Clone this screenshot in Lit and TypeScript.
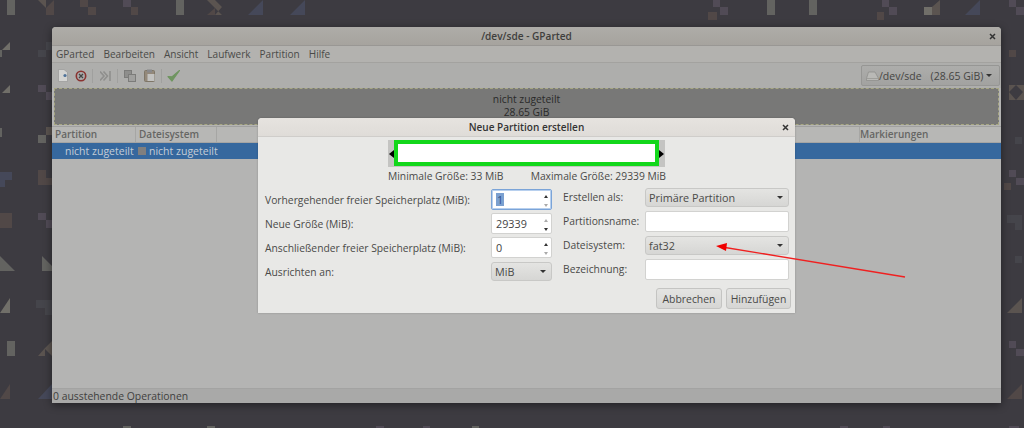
import { LitElement, html, css, svg } from "lit";
import { customElement } from "lit/decorators.js";

const GRAY = "#636360", TAN = "#5b5450", BROWN = "#514847", PURPLE = "#514b56", DARK = "#45454b", BLUE = "#454859", LGRAY = "#716f69";

const rects: [number, number, number, number, string][] = [
  [7, 0, 8, 15, GRAY], [80, 0, 8, 7, BROWN], [88, 7, 8, 8, BROWN], [123, 0, 8, 7, PURPLE], [131, 7, 7, 8, BROWN], [176, 0, 8, 15, GRAY],
  [713, 0, 7, 7, PURPLE], [720, 7, 8, 8, PURPLE], [708, 12, 9, 8, BROWN], [767, 0, 8, 15, GRAY], [809, 0, 8, 15, GRAY],
  [877, 12, 7, 8, BROWN], [889, 7, 8, 8, PURPLE], [882, 0, 7, 7, PURPLE], [924, 7, 8, 8, LGRAY],
  [0, 50, 2, 7, GRAY], [38, 50, 8, 7, DARK], [46, 42, 6, 8, DARK], [38, 85, 8, 7, PURPLE], [46, 92, 6, 8, PURPLE],
  [0, 128, 2, 9, GRAY], [38, 135, 8, 8, GRAY], [46, 127, 6, 8, TAN], [0, 213, 12, 15, BROWN], [38, 213, 8, 7, PURPLE], [46, 220, 6, 8, PURPLE],
  [7, 341, 8, 15, GRAY], [1009, 0, 7, 7, PURPLE], [1016, 7, 8, 8, PURPLE], [1009, 50, 7, 7, BROWN],
  [1015, 137, 7, 7, DARK], [1009, 170, 7, 7, PURPLE], [1016, 178, 8, 7, PURPLE], [1004, 183, 7, 7, BROWN],
  [1015, 256, 7, 7, DARK], [1015, 306, 7, 7, LGRAY], [1009, 341, 7, 7, PURPLE], [1016, 349, 8, 7, PURPLE],
  [123, 426, 8, 2, GRAY], [207, 426, 8, 2, GRAY], [376, 426, 8, 2, PURPLE], [423, 426, 7, 2, PURPLE], [472, 426, 7, 2, GRAY],
  [840, 426, 8, 2, PURPLE], [883, 426, 7, 2, PURPLE], [1009, 426, 10, 2, PURPLE],
];

const polys: [string, string][] = [
  ["38,0 46,0 46,8", TAN], ["46,8 54,0 54,15 46,15", BROWN],
  ["207,0 215,0 222,7 215,15 222,15 215,8", TAN], ["207,15 215,8 215,15", BROWN],
  ["248,15 263,0 263,15", BLUE], ["290,15 305,0 305,15", BLUE],
  ["932,7 940,0 940,15 932,15", TAN], ["965,15 980,0 980,15", BLUE],
  ["10,42 10,50 2,50", LGRAY], ["10,85 10,93 2,93", LGRAY], ["0,172 12,172 12,180 5,180 5,187 0,187", BLUE],
  ["38,170 46,170 46,178 52,178 52,185 38,185", BROWN], ["0,256 15,271 0,271", GRAY], ["42,256 52,266 52,271 42,271", GRAY],
  ["10,298 10,313 0,313", LGRAY], ["36,300 52,300 52,315 45,315 45,308 36,308", DARK],
  ["38,341 45,348 38,356 45,356 45,349 52,356 52,341 45,348", TAN], ["10,384 10,399 0,399", BROWN], ["38,399 52,384 52,399", BLUE],
  ["1009,85 1024,85 1024,100 1009,100 1009,92 1016,100 1023,92 1016,85 1009,92", TAN],
  ["1007,215 1022,215 1022,230 1015,230 1015,223 1007,223", DARK],
  ["1022,298 1022,313 1007,313", TAN], ["1022,384 1022,399 1007,399", BROWN],
];

const closeIcon = html`<svg class="x" width="7" height="7" viewBox="0 0 7 7"><path d="M1 1L6 6M6 1L1 6" stroke="#333" stroke-width="1.5"/></svg>`;

@customElement("app-root")
export class AppRoot extends LitElement {
  static styles = css`
    :host { display: block; width: 1024px; height: 428px; position: relative; overflow: hidden; background: #3d3b41; font-family: "Open Sans", "Noto Sans", sans-serif; font-size: 10.3px; color: #4e4e4c; }
    * { box-sizing: border-box; }
    .wall, .arrow { position: absolute; inset: 0; }
    .win { position: absolute; left: 52px; top: 27px; width: 949px; height: 376px; display: flex; flex-direction: column; background: #b4b4b3; border-radius: 4px 4px 0 0; box-shadow: 0 2px 9px rgba(0,0,0,.45); overflow: hidden; }
    .wintitle { height: 19px; flex: none; display: flex; align-items: center; justify-content: center; position: relative; background: linear-gradient(#aeaca8, #a6a39e); border-bottom: 1px solid #999794; font-weight: 600; font-size: 10.1px; color: #3f3f3d; }
    .x { position: absolute; right: 5px; top: 6px; display: block; }
    .menu { height: 17px; flex: none; display: flex; align-items: center; gap: 9px; padding-left: 4px; background: #b3b2af; border-bottom: 1px solid #a3a29f; color: #4a4a48; font-size: 10.05px; }
    .toolbar { height: 25px; flex: none; display: flex; align-items: center; padding-left: 6px; background: #aeaeac; position: relative; }
    .toolbar svg { flex: none; display: block; }
    .sep { width: 1px; height: 14px; background: #a0a09e; flex: none; }
    .device { margin-left: auto; margin-right: 1px; width: 139px; height: 21px; display: flex; align-items: center; padding: 0 7px 0 4px; background: linear-gradient(#adadab, #a2a2a0); border: 1px solid #969694; border-radius: 2px; color: #454543; font-size: 10.5px; white-space: nowrap; }
    .device .size { margin-left: 9px; }
    .device .caret { margin-left: auto; }
    .caret { width: 0; height: 0; border-left: 3px solid transparent; border-right: 3px solid transparent; border-top: 3px solid #333; flex: none; }
    .graph { height: 37px; flex: none; margin: 0 2px 1px 2px; border: 1px dashed #a6a682; background: #787877; display: flex; flex-direction: column; align-items: center; padding-top: 4px; color: #2a2a2a; line-height: 13px; font-size: 10.3px; }
    .thead { height: 17px; flex: none; display: flex; align-items: center; background: #b7b7b5; border-top: 1px solid #a0a09f; border-bottom: 1px solid #a5a5a4; font-weight: 600; color: #666664; font-size: 10px; position: relative; }
    .thead span { padding-left: 3px; border-right: 1px solid #a6a6a4; height: 15px; line-height: 15px; }
    .thead .c1 { width: 84px; } .thead .c2 { width: 81px; } .thead .c3 { width: 643px; } .thead .c4 { border: 0; padding-left: 0; }
    .row { height: 16px; flex: none; display: flex; align-items: center; background: #36689e; color: #c5cdd6; font-size: 10.5px; }
    .row .a { width: 86px; padding-left: 13px; white-space: nowrap; flex: none; }
    .row i { width: 8px; height: 8px; background: #7f7f7f; margin-right: 3px; flex: none; }
    .fill { flex: 1; }
    .status { height: 15px; flex: none; background: #a9a9a8; border-top: 1px solid #a3a3a2; display: flex; align-items: center; padding-left: 1px; color: #3f3f3e; font-size: 10.4px; }
    .dlg { position: absolute; left: 258px; top: 118px; width: 537px; height: 195px; display: flex; flex-direction: column; background: #e8e8e6; border-radius: 4px 4px 0 0; box-shadow: 0 0 2px rgba(0,0,0,.25); color: #4a4a48; }
    .dtitle { height: 19px; flex: none; display: flex; align-items: center; justify-content: center; position: relative; background: linear-gradient(#e6e3df, #dfdcd8); border-bottom: 1px solid #cfcdca; font-weight: 600; font-size: 10px; color: #333; border-radius: 4px 4px 0 0; }
    .dtitle .x { right: 6px; top: 6px; }
    .preview { align-self: flex-start; margin: 3px 0 0 130px; width: 277px; height: 27px; background: #c4c4c2; position: relative; padding: 0 6px; flex: none; }
    .bar { height: 26px; border: 4px solid #12d71a; background: #fff; }
    .h { position: absolute; top: 10px; width: 0; height: 0; border-top: 4px solid transparent; border-bottom: 4px solid transparent; }
    .h.l { left: 1px; border-right: 5px solid #000; }
    .h.r { right: 1px; border-left: 5px solid #000; }
    .minmax { margin: 3px 0 0 130px; width: 278px; display: flex; justify-content: space-between; line-height: 13px; flex: none; white-space: nowrap; font-size: 10.3px; }
    .form { margin: 3px 0 0 7px; display: grid; grid-template-columns: 226px 61px 93px 144px; grid-auto-rows: 24px; align-items: center; }
    .form label { white-space: nowrap; margin-top: 4px; }
    .form label.rl { padding-left: 11px; margin-top: 0; margin-bottom: 2px; }
    .up2 { margin-bottom: 2px; }
    .down2 { margin-top: 2px; }
    .spin { height: 21px; display: flex; background: #fff; border: 1px solid #d2d2d0; border-radius: 2px; align-items: center; padding-left: 4px; color: #444; font-size: 10.8px; position: relative; margin-top: 2px; }
    .spin.focus { border-color: #7ba4d8; box-shadow: inset 0 0 0 1px #b8d0ee; }
    .spin .sel { background: #7ba0d0; color: #33508a; padding: 0 1px; line-height: 13px; }
    .spin .ar { position: absolute; right: 1px; top: 2px; bottom: 2px; width: 8px; display: flex; flex-direction: column; justify-content: space-between; align-items: center; }
    .ar b { width: 0; height: 0; border-left: 2.5px solid transparent; border-right: 2.5px solid transparent; display: block; margin: 3px 0; }
    .ar b.up { border-bottom: 3px solid #333; } .ar b.dn { border-top: 3px solid #333; }
    .ar b.up.off { border-bottom-color: #aaa; } .ar b.dn.off { border-top-color: #aaa; }
    .sel-btn { height: 19px; display: flex; align-items: center; padding: 0 5px 0 3px; background: linear-gradient(#e4e4e2, #d6d6d4); border: 1px solid #c8c8c6; border-radius: 3px; color: #4a4a48; font-size: 10.8px; }
    .sel-btn .caret { margin-left: auto; }
    .entry { height: 21px; background: #fff; border: 1px solid #d2d2d0; border-radius: 2px; }
    .buttons { margin: 6px 4px 0 0; display: flex; justify-content: flex-end; gap: 4px; }
    .btn { height: 21px; display: flex; align-items: center; justify-content: center; background: linear-gradient(#e4e4e2, #d6d6d4); border: 1px solid #c4c4c2; border-radius: 3px; color: #4a4a48; font-size: 10.4px; }
    .btn.a1 { width: 66px; } .btn.a2 { width: 65px; }
    .ml5 { margin-left: 5px; } .ml6 { margin-left: 6px; } .ml7 { margin-left: 7px; } .ml8 { margin-left: 8px; }
    .arrow { pointer-events: none; }
  `;

  render() {
    return html`
      <svg class="wall" width="1024" height="428" viewBox="0 0 1024 428">
        ${rects.map(([x, y, w, h, c]) => svg`<rect x=${x} y=${y} width=${w} height=${h} fill=${c}></rect>`)}
        ${polys.map(([p, c]) => svg`<polygon points=${p} fill=${c}></polygon>`)}
      </svg>
      <div class="win">
        <div class="wintitle">/dev/sde - GParted${closeIcon}</div>
        <div class="menu"><span>GParted</span><span>Bearbeiten</span><span>Ansicht</span><span>Laufwerk</span><span>Partition</span><span>Hilfe</span></div>
        <div class="toolbar">
          <svg width="10" height="13" viewBox="0 0 10 13"><path d="M.5 .5H6L9.5 3.5V12.5H.5Z" fill="#d4d4d2" stroke="#9a9a98" stroke-width=".7"/><circle cx="7" cy="6.5" r="1.6" fill="#4f7299"/></svg>
          <svg class="ml7" width="12" height="12" viewBox="0 0 12 12"><circle cx="6" cy="6" r="4.7" fill="#aaa" stroke="#8a3330" stroke-width="1.6"/><path d="M4 4L8 8M8 4L4 8" stroke="#444" stroke-width="1.2"/></svg>
          <span class="sep ml5"></span>
          <svg class="ml7" width="11" height="12" viewBox="0 0 11 12"><path d="M0 1.5L4 6L0 10.5M3.5 1.5L7.5 6L3.5 10.5" fill="none" stroke="#8f8f8d" stroke-width="1.6"/><path d="M10 1V11" stroke="#8a8a88" stroke-width="1.4"/></svg>
          <span class="sep ml6"></span>
          <svg class="ml6" width="12" height="12" viewBox="0 0 12 12"><rect x=".5" y=".5" width="7" height="7" fill="#8e8e8c" stroke="#7c7c7a"/><rect x="4.5" y="4.5" width="7" height="7" fill="#a0a09e" stroke="#7c7c7a"/></svg>
          <svg class="ml8" width="11" height="13" viewBox="0 0 11 13"><rect x=".5" y="1.5" width="10" height="11" rx="1" fill="#94897a" stroke="#7e7668"/><rect x="3" y=".5" width="5" height="3" fill="#88888a"/><rect x="3.5" y="5" width="7" height="7" fill="#c2c2c0"/></svg>
          <span class="sep ml6"></span>
          <svg class="ml5" width="13" height="13" viewBox="0 0 13 13"><path d="M1 7.5L5 12L12.5 1.5L5.2 7.8Z" fill="#6f9560" stroke="#6f9560" stroke-width="1.2" stroke-linejoin="round"/></svg>
          <div class="device">
            <svg width="13" height="10" viewBox="0 0 13 10"><path d="M2.5 1H9L12.5 7.5V9.5H.5V7.5Z" fill="#b9b9b6" stroke="#8b8b88" stroke-width=".7"/><path d="M.8 7.5H12.2" stroke="#8b8b88" stroke-width=".6"/></svg>
            <span>/dev/sde</span><span class="size">(28.65 GiB)</span><span class="caret"></span>
          </div>
        </div>
        <div class="graph"><span>nicht zugeteilt</span><span>28.65 GiB</span></div>
        <div class="thead"><span class="c1">Partition</span><span class="c2">Dateisystem</span><span class="c3"></span><span class="c4">Markierungen</span></div>
        <div class="row"><span class="a">nicht zugeteilt</span><i></i><span>nicht zugeteilt</span></div>
        <div class="fill"></div>
        <div class="status">0 ausstehende Operationen</div>
      </div>
      <div class="dlg">
        <div class="dtitle">Neue Partition erstellen${closeIcon}</div>
        <div class="preview"><div class="bar"></div><span class="h l"></span><span class="h r"></span></div>
        <div class="minmax"><span>Minimale Größe: 33 MiB</span><span>Maximale Größe: 29339 MiB</span></div>
        <div class="form">
          <label>Vorhergehender freier Speicherplatz (MiB):</label>
          <div class="spin focus"><span class="sel">1</span><span class="ar"><b class="up"></b><b class="dn off"></b></span></div>
          <label class="rl">Erstellen als:</label>
          <div class="sel-btn up2"><span>Primäre Partition</span><span class="caret"></span></div>
          <label>Neue Größe (MiB):</label>
          <div class="spin">29339<span class="ar"><b class="up off"></b><b class="dn"></b></span></div>
          <label class="rl">Partitionsname:</label>
          <div class="entry up2"></div>
          <label>Anschließender freier Speicherplatz (MiB):</label>
          <div class="spin">0<span class="ar"><b class="up"></b><b class="dn off"></b></span></div>
          <label class="rl">Dateisystem:</label>
          <div class="sel-btn up2"><span>fat32</span><span class="caret"></span></div>
          <label>Ausrichten an:</label>
          <div class="sel-btn down2">MiB<span class="caret"></span></div>
          <label class="rl">Bezeichnung:</label>
          <div class="entry up2"></div>
        </div>
        <div class="buttons"><div class="btn a1">Abbrechen</div><div class="btn a2">Hinzufügen</div></div>
      </div>
      <svg class="arrow" width="1024" height="428" viewBox="0 0 1024 428">
        <path d="M905 277L722 247" stroke="#f02020" stroke-width="1.4" fill="none"/>
        <path d="M716 246L727 243L726 251Z" fill="#f00000"/>
      </svg>
    `;
  }
}
